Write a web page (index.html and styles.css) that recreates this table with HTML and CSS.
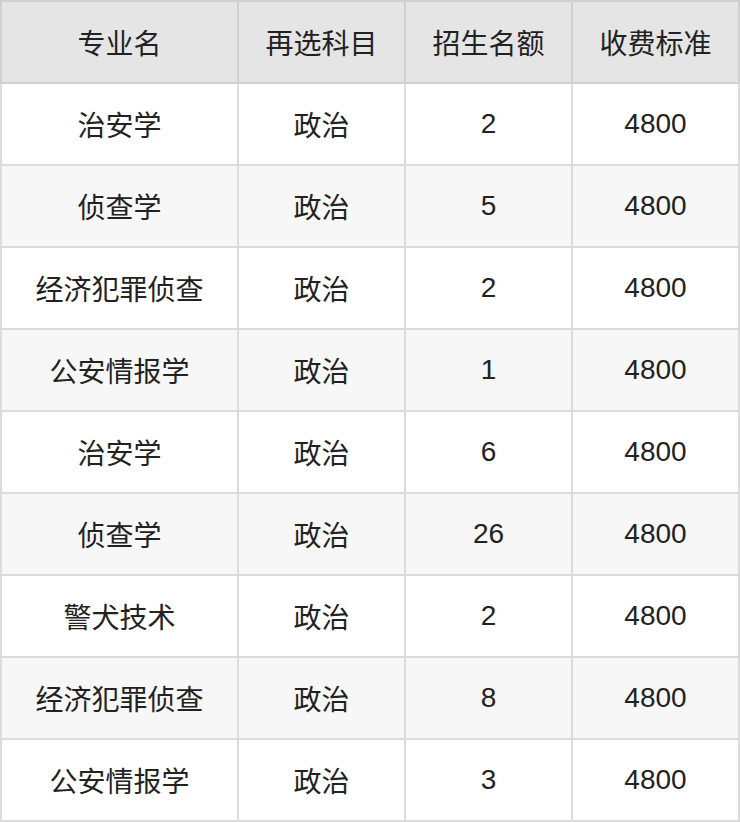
FILE: index.html
```html
<!DOCTYPE html>
<html lang="zh">
<head>
<meta charset="utf-8">
<link rel="stylesheet" href="styles.css">
</head>
<body>
<table class="tbl">
  <colgroup>
    <col class="c1"><col class="c2"><col class="c2"><col class="c2">
  </colgroup>
  <thead>
    <tr><th>专业名</th><th>再选科目</th><th>招生名额</th><th>收费标准</th></tr>
  </thead>
  <tbody>
    <tr><td>治安学</td><td>政治</td><td>2</td><td>4800</td></tr>
    <tr><td>侦查学</td><td>政治</td><td>5</td><td>4800</td></tr>
    <tr><td>经济犯罪侦查</td><td>政治</td><td>2</td><td>4800</td></tr>
    <tr><td>公安情报学</td><td>政治</td><td>1</td><td>4800</td></tr>
    <tr><td>治安学</td><td>政治</td><td>6</td><td>4800</td></tr>
    <tr><td>侦查学</td><td>政治</td><td>26</td><td>4800</td></tr>
    <tr><td>警犬技术</td><td>政治</td><td>2</td><td>4800</td></tr>
    <tr><td>经济犯罪侦查</td><td>政治</td><td>8</td><td>4800</td></tr>
    <tr><td>公安情报学</td><td>政治</td><td>3</td><td>4800</td></tr>
  </tbody>
</table>
</body>
</html>
```
FILE: styles.css
```css
html, body {
  margin: 0;
  padding: 0;
  background: #ffffff;
}
.tbl {
  border-collapse: collapse;
  table-layout: fixed;
  width: 740px;
  font-family: "Liberation Sans", "Noto Sans CJK SC", sans-serif;
  font-size: 28px;
  color: #222222;
}
.c1 { width: 237px; }
.c2 { width: 167px; }
.tbl th, .tbl td {
  border: 2px solid #dcdcdc;
  height: 79px;
  padding: 0 0 1px 0;
  text-align: center;
  vertical-align: middle;
  font-weight: normal;
  box-sizing: content-box;
}
.tbl th {
  background: #e5e5e5;
  border-color: #d0d0d0;
  color: #222222;
}
.tbl tbody tr:nth-child(even) td {
  background: #f7f7f7;
}
```
